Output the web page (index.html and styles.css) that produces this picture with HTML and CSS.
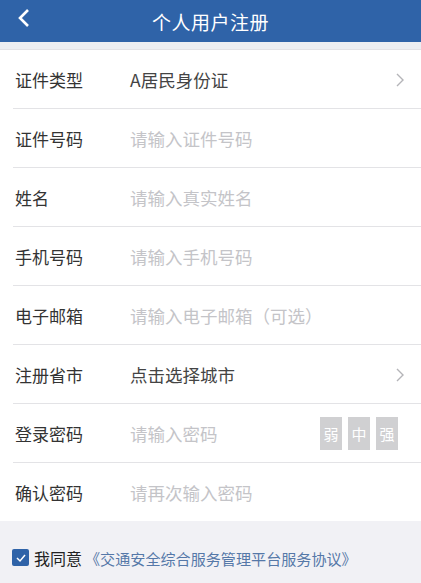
FILE: index.html
```html
<!DOCTYPE html>
<html lang="zh-CN">
<head>
  <meta charset="UTF-8">
  <title>个人用户注册</title>
  <link rel="stylesheet" href="styles.css">
</head>
<body>
  <header class="topbar">
    <span class="back">
      <svg width="14" height="20" viewBox="0 0 14 20"><path d="M11 2 L3 10 L11 18" fill="none" stroke="#fff" stroke-width="2.6"/></svg>
    </span>
    <span class="title">个人用户注册</span>
  </header>
  <div class="gap"></div>
  <div class="form">
    <div class="row">
      <span class="label">证件类型</span>
      <span class="value">A居民身份证</span>
      <span class="arrow"><svg width="10" height="16" viewBox="0 0 10 16"><path d="M2 2 L8 8 L2 14" fill="none" stroke="#b4b4b8" stroke-width="1.4"/></svg></span>
    </div>
    <div class="row">
      <span class="label">证件号码</span>
      <span class="value hint">请输入证件号码</span>
    </div>
    <div class="row">
      <span class="label">姓名</span>
      <span class="value hint">请输入真实姓名</span>
    </div>
    <div class="row">
      <span class="label">手机号码</span>
      <span class="value hint">请输入手机号码</span>
    </div>
    <div class="row">
      <span class="label">电子邮箱</span>
      <span class="value hint">请输入电子邮箱（可选）</span>
    </div>
    <div class="row">
      <span class="label">注册省市</span>
      <span class="value">点击选择城市</span>
      <span class="arrow"><svg width="10" height="16" viewBox="0 0 10 16"><path d="M2 2 L8 8 L2 14" fill="none" stroke="#b4b4b8" stroke-width="1.4"/></svg></span>
    </div>
    <div class="row">
      <span class="label">登录密码</span>
      <span class="value hint">请输入密码</span>
      <span class="levels"><i>弱</i><i>中</i><i>强</i></span>
    </div>
    <div class="row last">
      <span class="label">确认密码</span>
      <span class="value hint">请再次输入密码</span>
    </div>
  </div>
  <div class="agree">
    <span class="check"><svg width="12" height="10" viewBox="0 0 12 10"><path d="M2 5 L5 8 L10 2" fill="none" stroke="#fff" stroke-width="1.5"/></svg></span>
    <span class="me">我同意</span>
    <span class="protocol">《交通安全综合服务管理平台服务协议》</span>
  </div>
</body>
</html>
```

FILE: styles.css
```css
body {
  margin: 0;
  background: #f1f1f5;
  font-family: "Noto Sans CJK SC", "Noto Sans", sans-serif;
  color: #333;
}
.topbar {
  height: 42px;
  background: #2f63a8;
  display: flex;
  align-items: center;
  justify-content: center;
  position: relative;
}
.back {
  position: absolute;
  left: 17px;
  top: 8px;
}
.title {
  color: #fff;
  font-size: 19px;
  letter-spacing: 0.5px;
}
.gap {
  height: 7px;
  background: #eceef2;
  border-bottom: 1px solid #e2e2e6;
}
.form {
  background: #fff;
}
.row {
  height: 58px;
  margin-left: 13px;
  border-bottom: 1px solid #e3e3e6;
  display: flex;
  align-items: center;
}
.row.last {
  border-bottom: none;
  margin-left: 0;
  padding-left: 13px;
}
.label {
  width: 115px;
  padding-left: 2px;
  font-size: 17px;
  color: #333;
}
.value {
  flex: 1;
  font-size: 17.5px;
  color: #444;
}
.hint {
  color: #c4c4c8;
}
.arrow {
  width: 26px;
  display: flex;
  padding-top: 2px;
}
.levels {
  display: flex;
  gap: 6px;
  margin-right: 23px;
}
.levels i {
  font-style: normal;
  width: 22px;
  height: 33px;
  background: #d0d0d2;
  color: #fff;
  font-size: 15px;
  display: flex;
  align-items: center;
  justify-content: center;
}
.agree {
  height: 62px;
  display: flex;
  align-items: center;
  padding-left: 12px;
  padding-top: 11px;
  box-sizing: border-box;
}
.check {
  width: 17px;
  height: 17px;
  background: #2f63a8;
  border-radius: 2px;
  display: flex;
  align-items: center;
  justify-content: center;
  margin-right: 5px;
}
.me {
  font-size: 16px;
  color: #222;
  margin-right: 3px;
}
.protocol {
  font-size: 15.1px;
  color: #5578a8;
}
```
